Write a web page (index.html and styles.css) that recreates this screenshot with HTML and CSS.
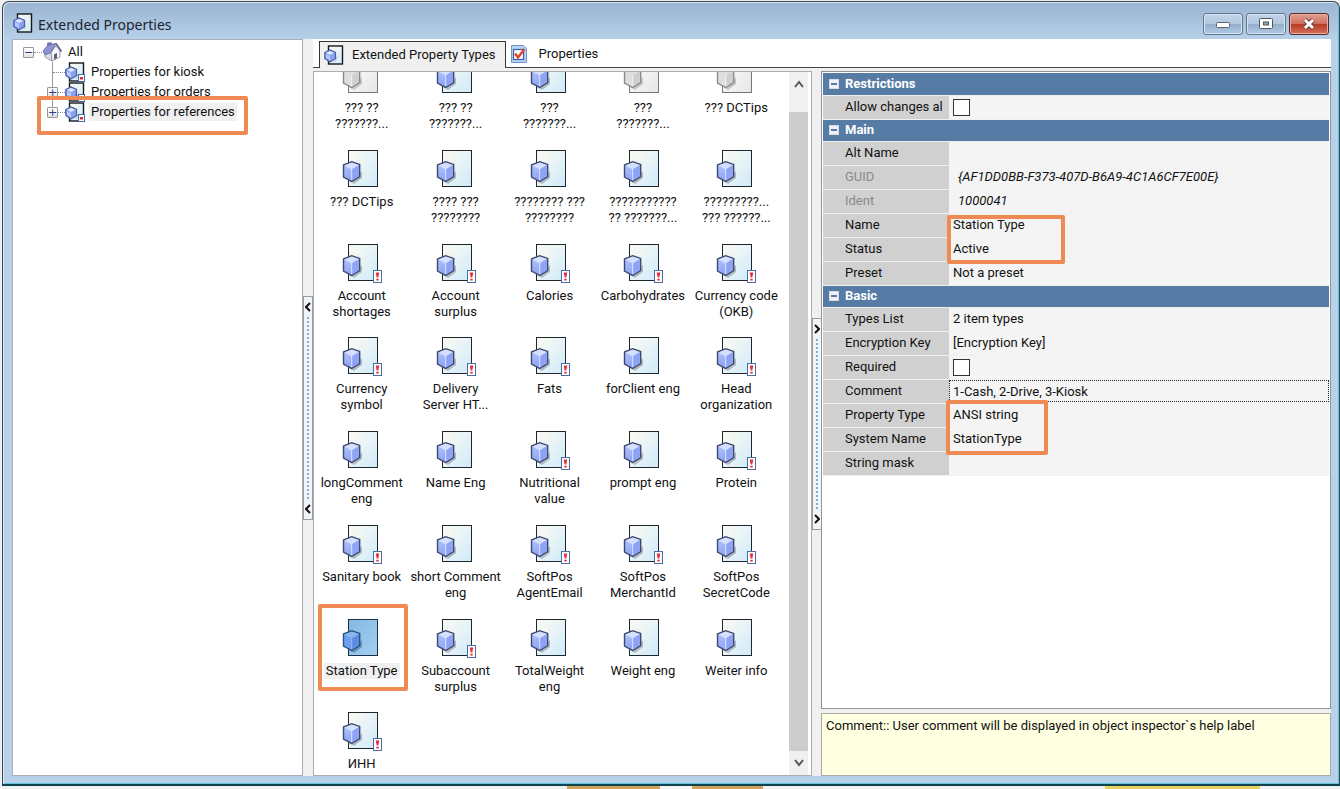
FILE: index.html
```html
<!DOCTYPE html>
<html lang="en">
<head>
<meta charset="utf-8">
<title>Extended Properties</title>
<link rel="stylesheet" href="styles.css">
</head>
<body>
<svg class="defs" aria-hidden="true">
  <defs>
    <linearGradient id="paper" x1="0" y1="0" x2="1" y2="1"><stop offset="0" stop-color="#fbfaf0"/><stop offset=".45" stop-color="#e9f4f6"/><stop offset="1" stop-color="#cfeafa"/></linearGradient>
    <linearGradient id="paperSel" x1="0" y1="0" x2="1" y2="1"><stop offset="0" stop-color="#83b8e0"/><stop offset="1" stop-color="#a2d0f2"/></linearGradient>
    <linearGradient id="paperOff" x1="0" y1="0" x2="1" y2="1"><stop offset="0" stop-color="#fff"/><stop offset="1" stop-color="#e6e6e6"/></linearGradient>
    <linearGradient id="face" x1="0" y1="0" x2="0" y2="1"><stop offset="0" stop-color="#b4c6fc"/><stop offset="1" stop-color="#8ba2f6"/></linearGradient>
    <symbol id="page" viewBox="0 0 40 39">
      <rect x="6.500" y=".5" width="29" height="36" fill="url(#paper)" stroke="#20262e"/>
      <path d="M7 31l5 3 8-6v-7l-7 8z" fill="#8c96a4" opacity=".6"/>
      <path d="M1.500 15L9.700 11.800L17.700 14.500V26.500L9.700 31.500L1.500 27z" fill="url(#face)" stroke="#3f4a6c" stroke-width="1.400"/>
      <path d="M2.300 15.500L9.700 12.600L17 15L9.700 19.500z" fill="#d5e0ff"/>
      <path d="M9.700 19.500L17 15V26L9.700 30.600z" fill="#8fa3f4"/>
      <path d="M9.700 19V30" stroke="#dbe4ff"/>
    </symbol>
    <symbol id="pageSel" viewBox="0 0 40 39">
      <rect x="6.500" y=".5" width="29" height="36" fill="url(#paperSel)" stroke="#1d2f44"/>
      <path d="M7 31l5 3 8-6v-7l-7 8z" fill="#4a7199" opacity=".6"/>
      <path d="M1.500 15L9.700 11.800L17.700 14.500V26.500L9.700 31.500L1.500 27z" fill="#6c9ff0" stroke="#2c5080" stroke-width="1.400"/>
      <path d="M2.300 15.500L9.700 12.600L17 15L9.700 19.500z" fill="#86b6f0"/>
      <path d="M9.700 19.500L17 15V26L9.700 30.600z" fill="#5a8ce4"/>
      <path d="M9.700 19V30" stroke="#8dbcf0"/>
    </symbol>
    <symbol id="pageOff" viewBox="0 0 40 39">
      <rect x="6.500" y=".5" width="29" height="36" fill="url(#paperOff)" stroke="#777"/>
      <path d="M7 31l5 3 8-6v-7l-7 8z" fill="#aaa" opacity=".6"/>
      <path d="M1.500 15L9.700 11.800L17.700 14.500V26.500L9.700 31.500L1.500 27z" fill="#dedede" stroke="#8a8a8a" stroke-width="1.400"/>
      <path d="M9.700 19.500L17 15V26L9.700 30.600z" fill="#cfcfcf"/>
      <path d="M9.700 19V30" stroke="#f4f4f4"/>
    </symbol>
    <symbol id="alert" viewBox="0 0 9 13">
      <rect x=".5" y=".5" width="8" height="12" fill="#fff" stroke="#4a6ea2"/>
      <path d="M2.700 2.500h3.600l-1 5H3.700zM3.300 8.700h2.400v1.800H3.300z" fill="#e2303c"/>
    </symbol>
    <symbol id="small" viewBox="0 0 20 20">
      <rect x="4.500" y="1" width="14" height="18" fill="url(#paper)" stroke="#15191f" stroke-width="1.400"/>
      <path d="M5 17l7-1 2-6-4 6z" fill="#8c96a4" opacity=".5"/>
      <path d="M.8 7.500L6 5L11.500 7.500V13.500L6 17L.8 13.500z" fill="#8aa0f0" stroke="#4a5fa8" stroke-width="1.200"/>
      <path d="M2 7.700L6 6L10.300 7.700L6 10z" fill="#dfe7ff"/>
      <path d="M2 9l4 2v4.500L2 13z" fill="#b8c8ff"/>
    </symbol>
    <symbol id="dot" viewBox="0 0 7 8">
      <rect x=".5" y=".5" width="6" height="7" fill="#fff" stroke="#4a68a8"/>
      <path d="M2 3h3v2.500H2z" fill="#dc2850"/>
    </symbol>
    <symbol id="house" viewBox="0 0 20 20">
      <path d="M3 9v6l7 4V8z" fill="#d9dce8" stroke="#8a8fa4" stroke-width=".8"/>
      <path d="M10 19l8-4V9l-4-5-5 6z" fill="#f5f5fa" stroke="#7d8197" stroke-width=".8"/>
      <path d="M5 3V1l3-1 2 1v3z" fill="#737bb4"/>
      <path d="M1 9L6 3L14 1.500L9 10.500L3 13z" fill="#8d93cc" stroke="#5c6298" stroke-width=".8"/>
      <path d="M14 1.500L19.500 9.500" stroke="#51568c" stroke-width="1.400"/>
      <path d="M12 17.500v-5l3-1.500v5z" fill="#5b5d70"/>
    </symbol>
    <symbol id="check" viewBox="0 0 16 18">
      <path d="M.5.500h12l3 3v14H.5z" fill="#b9d2f4" stroke="#6f93cc"/>
      <rect x="2.500" y="4.500" width="10" height="10" fill="#fff" stroke="#3a5ca0" stroke-width="1.200"/>
      <path d="M4 8.500l3 4L13.500 4" fill="none" stroke="#e0442c" stroke-width="2.400"/>
    </symbol>
  </defs>
</svg>

<main class="window">
  <header class="titlebar">
    <svg class="ic20"><use href="#small"/></svg>
    <h1 class="title">Extended Properties</h1>
    <div class="winbtns">
      <button class="winbtn" aria-label="Minimize"><svg width="16" height="12"><rect x="1.500" y="4.500" width="13" height="5" rx="1" fill="#fff" stroke="#5a6470"/></svg></button>
      <button class="winbtn" aria-label="Maximize"><svg width="16" height="12"><rect x="1.500" y=".5" width="13" height="10" rx="1" fill="#fff" stroke="#4f5862"/><rect x="5.500" y="4" width="5" height="3" fill="#8ea3b8" stroke="#4f5862"/></svg></button>
      <button class="winbtn close" aria-label="Close"><svg width="16" height="12"><path d="M4 2l8 8M12 2l-8 8" stroke="#5b3a3a" stroke-width="4.600"/><path d="M4 2l8 8M12 2l-8 8" stroke="#fff" stroke-width="3"/></svg></button>
    </div>
  </header>

  <div class="body">
    <nav class="tree" aria-label="Groups">
      <div class="node root"><button class="exp" aria-label="Collapse">−</button><span class="line"></span><svg class="ic20"><use href="#house"/></svg><span class="nlabel">All</span></div>
      <div class="branch">
        <div class="node"><span class="line long"></span><span class="nicon"><svg class="ic20"><use href="#small"/></svg><svg class="dot"><use href="#dot"/></svg></span><span class="nlabel">Properties for kiosk</span></div>
        <div class="node"><button class="exp" aria-label="Expand">+</button><span class="line"></span><span class="nicon"><svg class="ic20"><use href="#small"/></svg><svg class="dot"><use href="#dot"/></svg></span><span class="nlabel">Properties for orders</span></div>
        <div class="node"><button class="exp" aria-label="Expand">+</button><span class="line"></span><span class="nicon"><svg class="ic20"><use href="#small"/></svg><svg class="dot"><use href="#dot"/></svg></span><span class="nlabel picked">Properties for references</span></div>
      </div>
      <span class="mark mark-tree"></span>
    </nav>

    <div class="splitter"><div class="grip"><button class="arrow" aria-label="Collapse left"><svg width="6" height="10"><path d="M5 1L1 5l4 4"/></svg></button><span class="dots"></span><button class="arrow" aria-label="Collapse left"><svg width="6" height="10"><path d="M5 1L1 5l4 4"/></svg></button></div></div>

    <div class="work">
      <div class="tabs" role="tablist">
        <button class="tab active" role="tab" aria-selected="true"><svg class="ic20"><use href="#small"/></svg>Extended Property Types</button>
        <button class="tab" role="tab" aria-selected="false"><svg class="ic-check"><use href="#check"/></svg>Properties</button>
      </div>
      <div class="panes">
        <section class="list">
          <div class="tiles" id="tiles"></div>
          <div class="scroll"><button class="sbtn" aria-label="Scroll up"><svg width="10" height="8"><path d="M1 7l4-5 4 5"/></svg></button><span class="thumb"></span><button class="sbtn" aria-label="Scroll down"><svg width="10" height="8"><path d="M1 1l4 5 4-5"/></svg></button></div>
        </section>

        <div class="splitter right"><div class="grip"><button class="arrow" aria-label="Collapse right"><svg width="6" height="10"><path d="M1 1l4 4-4 4"/></svg></button><span class="dots"></span><button class="arrow" aria-label="Collapse right"><svg width="6" height="10"><path d="M1 1l4 4-4 4"/></svg></button></div></div>

        <aside class="inspector">
          <div class="props">
            <table class="grid">
              <colgroup><col class="cname"><col></colgroup>
              <tbody>
              <tr class="head"><th colspan="2"><button class="fold" aria-label="Collapse Restrictions"></button>Restrictions</th></tr>
              <tr><th><label for="allow">Allow changes al</label></th><td><input type="checkbox" id="allow"></td></tr>
              <tr class="head"><th colspan="2"><button class="fold" aria-label="Collapse Main"></button>Main</th></tr>
              <tr><th>Alt Name</th><td></td></tr>
              <tr class="ro"><th>GUID</th><td>{AF1DD0BB-F373-407D-B6A9-4C1A6CF7E00E}</td></tr>
              <tr class="ro"><th>Ident</th><td>1000041</td></tr>
              <tr><th>Name</th><td>Station Type<span class="mark mark-name"></span></td></tr>
              <tr><th>Status</th><td>Active</td></tr>
              <tr><th>Preset</th><td>Not a preset</td></tr>
              <tr class="head"><th colspan="2"><button class="fold" aria-label="Collapse Basic"></button>Basic</th></tr>
              <tr><th>Types List</th><td>2 item types</td></tr>
              <tr><th>Encryption Key</th><td>[Encryption Key]</td></tr>
              <tr><th><label for="req">Required</label></th><td><input type="checkbox" id="req"></td></tr>
              <tr><th><label for="comment">Comment</label></th><td class="edit"><input type="text" id="comment" value="1-Cash, 2-Drive, 3-Kiosk"></td></tr>
              <tr><th>Property Type</th><td>ANSI string<span class="mark mark-type"></span></td></tr>
              <tr><th>System Name</th><td>StationType</td></tr>
              <tr><th>String mask</th><td></td></tr>
              </tbody>
            </table>
          </div>
          <p class="help">Comment:: User comment will be displayed in object inspector`s help label</p>
        </aside>
      </div>
    </div>
  </div>
</main>
<div class="desktop"></div>
<script src="tiles.js"></script>
</body>
</html>
```

FILE: tiles.js
```js
// Each entry: label lines, then flags (o = disabled, a = alert badge, s = selected).
const items = [
  ["??? ??|???????...", "o"], ["??? ??|???????...", ""], ["???|???????...", ""], ["???|???????...", "o"], ["??? DCTips", "o"],
  ["??? DCTips", ""], ["???? ???|????????", ""], ["???????? ???|????????", ""], ["???????????|?? ???????...", ""], ["?????????...|??? ??????...", ""],
  ["Account|shortages", "a"], ["Account|surplus", "a"], ["Calories", "a"], ["Carbohydrates", "a"], ["Currency code|(OKB)", "a"],
  ["Currency|symbol", "a"], ["Delivery|Server HT...", "a"], ["Fats", "a"], ["forClient eng", ""], ["Head|organization", "a"],
  ["longComment|eng", ""], ["Name Eng", ""], ["Nutritional|value", "a"], ["prompt eng", ""], ["Protein", "a"],
  ["Sanitary book", "a"], ["short Comment|eng", ""], ["SoftPos|AgentEmail", "a"], ["SoftPos|MerchantId", "a"], ["SoftPos|SecretCode", "a"],
  ["Station Type", "s"], ["Subaccount|surplus", "a"], ["TotalWeight|eng", ""], ["Weight eng", ""], ["Weiter info", ""],
  ["ИНН", "a"]
];
document.getElementById("tiles").innerHTML = items.map(([label, f]) => {
  const art = f === "o" ? "pageOff" : f === "s" ? "pageSel" : "page";
  return `<div class="tile${f === "s" ? " selected" : ""}"><span class="pic"><svg class="ic40"><use href="#${art}"/></svg>` +
    (f === "a" ? `<svg class="alert"><use href="#alert"/></svg>` : "") +
    `</span><span class="cap">${label.replace("|", "<br>")}</span>` +
    (f === "s" ? `<span class="mark mark-tile"></span>` : "") + `</div>`;
}).join("");
```

FILE: styles.css
```css
* { box-sizing: border-box; }
body {
  margin: 0;
  height: 100vh;
  display: flex;
  flex-direction: column;
  background: #eef1f2;
  font: 13px/16px Roboto, "Liberation Sans", sans-serif;
  color: #111;
  overflow: hidden;
}
button { padding: 0; font: inherit; color: inherit; }
svg { display: block; flex: none; }
.defs { position: absolute; width: 0; height: 0; }
.ic20 { width: 20px; height: 20px; }
.ic40 { width: 40px; height: 39px; }
.ic-check { width: 16px; height: 18px; }

.window {
  flex: 1;
  min-height: 0;
  margin: 1px 0 0 2px;
  display: flex;
  flex-direction: column;
  padding: 0 8px 8px 9px;
  border: 1px solid #3c4650;
  border-bottom: 2px solid #0e4350;
  border-radius: 7px 7px 0 0;
  background: linear-gradient(#9ab4d2, #b7d1ea 38px, #b7d1ea);
  box-shadow: inset 1px 1px 0 #d9e8f6, inset -1px -1px 0 #5fc5dd;
}
.titlebar { height: 37px; flex: none; display: flex; align-items: flex-start; padding: 11px 2px 0 1px; }
.title { flex: 1; margin: 2px 0 0 5px; font: 14px/20px "Noto Sans", "Open Sans", sans-serif; color: #1b2530; }
.winbtns { display: flex; gap: 3px; }
.winbtn {
  width: 40px;
  height: 22px;
  display: grid;
  place-items: center;
  border: 1px solid #5f7890;
  border-radius: 3px;
  background: linear-gradient(#c3d5e8, #b2c8df 48%, #94aecb 50%, #b1cbe4);
  box-shadow: inset 0 0 0 1px #d6e4f2;
}
.winbtn.close {
  border-color: #5a2a2a;
  background: linear-gradient(#e0a093, #d0705e 48%, #b83a22 50%, #d4705a);
  box-shadow: inset 0 0 0 1px #e8b0a4;
}

.body { flex: 1; min-height: 0; display: grid; grid-template-columns: 291px 10px minmax(0, 1fr); background: #f0f0f0; }

.tree { position: relative; background: #fff; border: 1px solid #a9aeb8; padding: 2px 0 0 10px; }
.node { display: flex; align-items: center; height: 20px; }
.exp {
  width: 11px;
  height: 11px;
  flex: none;
  display: grid;
  place-items: center;
  border: 1px solid #979797;
  border-radius: 1px;
  background: linear-gradient(#fff, #e4e4e4);
  font: 11px/9px "DejaVu Sans", sans-serif;
  color: #2b3f88;
}
.line { width: 8px; border-top: 1px dotted #888; }
.line.long { width: 13px; margin-left: 6px; }
.nlabel { padding: 0 2px; margin-left: 4px; line-height: 18px; white-space: nowrap; }
.picked { background: #f0f0f0; }
.branch { margin-left: 24px; background: linear-gradient(#999, #999) 5px 0 / 1px 50px no-repeat; }
.branch .line:not(.long) { width: 7px; }
.branch .line.long { width: 12px; }
.nicon, .pic { position: relative; }
.dot { position: absolute; right: 0; bottom: 0; width: 7px; height: 8px; }
.mark { position: absolute; z-index: 2; border: 4px solid #f08a54; border-radius: 2px; pointer-events: none; }
.mark-tree { left: 24px; top: 56px; width: 211px; height: 39px; }

.splitter { display: flex; align-items: center; justify-content: center; background: #f0f0f0; }
.grip {
  width: 10px;
  height: 224px;
  display: flex;
  flex-direction: column;
  align-items: center;
  border: 1px solid #9a9a9a;
  background: #f2f5f8;
}
.arrow { width: 8px; height: 20px; display: grid; place-items: center; border: 0; background: none; }
.arrow path { fill: none; stroke: #111; stroke-width: 2; }
.dots { flex: 1; border-left: 2px dotted #7fb0dc; }
.splitter.right .grip { height: 212px; }

.work { display: flex; flex-direction: column; min-width: 0; min-height: 0; }
.tabs { display: flex; align-items: flex-end; height: 29px; flex: none; padding: 2px 0 0 6px; background: #fff; border-bottom: 1px solid #444; }
.tab { display: flex; align-items: center; height: 26px; border: 0; background: none; gap: 11px; padding: 0 5px; white-space: nowrap; }
.tab.active { height: 27px; padding: 0 10px 0 4px; gap: 8px; background: #f0f0f0; border: 1px solid #333; border-bottom: 0; margin-bottom: -1px; }
.panes { flex: 1; min-height: 0; display: grid; grid-template-columns: 499px 9px minmax(0, 1fr); padding-top: 3px; }

.list { display: flex; min-height: 0; overflow: hidden; background: #fff; border: 1px solid #a9aeb8; padding: 0 3px 0 1px; }
.tiles { flex: 1; height: 750px; margin-top: -16px; display: grid; grid-template: repeat(8, 1fr) / repeat(5, 1fr); }
.tile { position: relative; display: flex; flex-direction: column; align-items: center; gap: 5px; }
.alert { position: absolute; right: 0; bottom: 0; width: 9px; height: 13px; }
.cap { text-align: center; white-space: nowrap; padding: 0 2px; }
.selected .cap { background: #f0f0f0; }
.mark-tile { left: 3px; top: -15px; width: 90px; height: 87px; }
.scroll { width: 19px; display: flex; flex-direction: column; background: #f0f0f0; margin-left: 6px; }
.sbtn { height: 24px; display: grid; place-items: center; border: 0; background: #f0f0f0; }
.sbtn path { fill: none; stroke: #555; stroke-width: 2; }
.thumb { flex: 1; margin-top: 16px; background: #cdcdcd; }

.inspector { display: flex; flex-direction: column; gap: 4px; min-width: 0; }
.props { flex: 1; background: #fff; border: 1px solid #8e939c; padding: 1px; }
.grid { width: 100%; table-layout: fixed; border-collapse: collapse; }
.cname { width: 126px; }
.grid th, .grid td { height: 24px; padding: 0 0 0 4px; text-align: left; font-weight: normal; white-space: nowrap; border-bottom: 1px solid #f0f0f0; }
.grid th { padding-left: 22px; background: #d0d0d0; overflow: hidden; }
.grid td { background: #f4f4f4; position: relative; }
.grid .head th { height: 22px; padding-left: 6px; background: #567ca6; color: #fff; font-weight: bold; }
.fold { width: 10px; height: 10px; margin-right: 6px; border: 1px solid #d5dde6; background: linear-gradient(#567ca6, #567ca6) center / 6px 2px no-repeat #f0f2f5; }
.ro th { color: #8a8a8a; }
.ro td { padding-left: 9px; font-style: italic; }
.grid input[type="checkbox"] { appearance: none; display: block; width: 17px; height: 17px; margin: 0; border: 1px solid #333; background: #fff; }
.grid .edit { padding: 0; }
.grid input[type="text"] { display: block; width: 100%; height: 22px; padding: 0 0 0 3px; border: 1px dotted #222; background: #f4f4f4; font: inherit; color: inherit; }
.mark-name { left: -2px; top: 1px; width: 118px; height: 49px; }
.mark-type { left: -3px; top: -4px; width: 102px; height: 55px; }
.help { margin: 0; height: 63px; padding: 4px; background: #ffffe1; border: 1px solid #a9a9a9; }

.desktop {
  height: 3px;
  flex: none;
  background: linear-gradient(90deg, #eef1f2 567px, #d0a25e 567px 660px, #f6f6f6 660px 692px, #d0a25e 692px 763px, #eef1f2 763px 1105px, #e8d35e 1105px 1260px, #eef1f2 1260px);
}
```
